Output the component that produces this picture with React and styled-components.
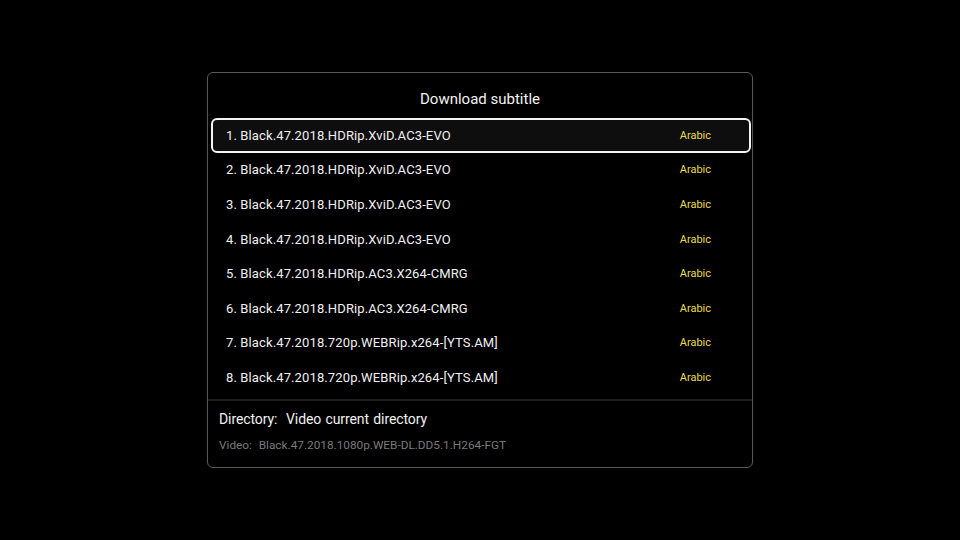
import styled, { createGlobalStyle } from 'styled-components';

const GlobalStyle = createGlobalStyle`
  html, body {
    margin: 0;
    padding: 0;
    background: #000;
  }
  body {
    font-family: Roboto, "Liberation Sans", sans-serif;
  }
`

const Screen = styled.div`
  width: 960px;
  height: 540px;
  background: #000;
  display: flex;
  align-items: center;
  justify-content: center;
`

const Panel = styled.div`
  width: 546px;
  height: 396px;
  box-sizing: border-box;
  border: 1px solid #5a5a5a;
  border-radius: 6px;
  display: flex;
  flex-direction: column;
`

const Title = styled.div`
  height: 45px;
  display: flex;
  align-items: center;
  justify-content: center;
  padding-top: 6px;
  box-sizing: border-box;
  color: #f2f2f2;
  font-size: 15px;
`

const List = styled.div`
  display: flex;
  flex-direction: column;
  padding: 0 1px 0 3px;
`

const Row = styled.div`
  height: 34.6px;
  box-sizing: border-box;
  display: flex;
  align-items: center;
  justify-content: space-between;
  padding: 0 36px 0 13px;
  border: 2px solid ${p => (p.$active ? '#f4f4f4' : 'transparent')};
  border-radius: 6px;
  background: ${p => (p.$active ? '#0e0e0e' : 'transparent')};
`

const Name = styled.span`
  color: #f0f0f0;
  font-size: 13px;
  letter-spacing: 0.12px;
`

const Lang = styled.span`
  color: #ebdb4c;
  font-size: 11px;
  margin-left: auto;
  margin-right: 2px;
`

const Divider = styled.div`
  height: 2px;
  background: #1c1c1c;
  margin-top: 4px;
`

const Footer = styled.div`
  display: flex;
  flex-direction: column;
  padding: 10px 11px 0;
  gap: 11px;
`

const Directory = styled.div`
  color: #f0f0f0;
  font-size: 14px;
  letter-spacing: -0.1px;
  word-spacing: 1px;
`

const VideoLine = styled.div`
  color: #7a7a7a;
  font-size: 11.8px;
  word-spacing: 0.5px;
`

const items = [
  'Black.47.2018.HDRip.XviD.AC3-EVO',
  'Black.47.2018.HDRip.XviD.AC3-EVO',
  'Black.47.2018.HDRip.XviD.AC3-EVO',
  'Black.47.2018.HDRip.XviD.AC3-EVO',
  'Black.47.2018.HDRip.AC3.X264-CMRG',
  'Black.47.2018.HDRip.AC3.X264-CMRG',
  'Black.47.2018.720p.WEBRip.x264-[YTS.AM]',
  'Black.47.2018.720p.WEBRip.x264-[YTS.AM]',
]

const App = () => {
  return (
    <Screen>
      <GlobalStyle />
      <Panel>
        <Title>Download subtitle</Title>
        <List>
          {items.map((name, i) => (
            <Row key={i} $active={i === 0}>
              <Name>{i + 1}. {name}</Name>
              <Lang>Arabic</Lang>
            </Row>
          ))}
        </List>
        <Divider />
        <Footer>
          <Directory>Directory:&nbsp; Video current directory</Directory>
          <VideoLine>Video:&nbsp; Black.47.2018.1080p.WEB-DL.DD5.1.H264-FGT</VideoLine>
        </Footer>
      </Panel>
    </Screen>
  )
}

export default App;
